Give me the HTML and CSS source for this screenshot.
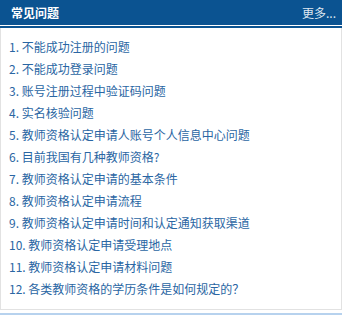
FILE: index.html
```html
<!DOCTYPE html>
<html>
<head>
<meta charset="utf-8">
<title>常见问题</title>
<link rel="stylesheet" href="styles.css">
</head>
<body>
<div class="faqbox">
	<div class="faqhead">
		<span class="faqtitle">常见问题</span>
		<a class="faqmore" href="#">更多...</a>
	</div>
	<ul class="faqlist">
		<li><a href="#">1. 不能成功注册的问题</a></li>
		<li><a href="#">2. 不能成功登录问题</a></li>
		<li><a href="#">3. 账号注册过程中验证码问题</a></li>
		<li><a href="#">4. 实名核验问题</a></li>
		<li><a href="#">5. 教师资格认定申请人账号个人信息中心问题</a></li>
		<li><a href="#">6. 目前我国有几种教师资格?</a></li>
		<li><a href="#">7. 教师资格认定申请的基本条件</a></li>
		<li><a href="#">8. 教师资格认定申请流程</a></li>
		<li><a href="#">9. 教师资格认定申请时间和认定通知获取渠道</a></li>
		<li><a href="#">10. 教师资格认定申请受理地点</a></li>
		<li><a href="#">11. 教师资格认定申请材料问题</a></li>
		<li><a href="#">12. 各类教师资格的学历条件是如何规定的？</a></li>
	</ul>
</div>
<div class="faqfoot"></div>
</body>
</html>
```
FILE: styles.css
```css
body {
	margin: 0;
	font-family: "Noto Sans CJK SC", "Liberation Sans", sans-serif;
	background-color: #ffffff;
}
.faqbox {
	width: 340px;
	border: 1px solid #e2e2e2;
	border-top: none;
}
.faqhead {
	display: flex;
	justify-content: space-between;
	align-items: center;
	height: 25px;
	padding: 0 6px 1px 11px;
	margin: 0 -1px;
	background-color: #0b5391;
	border-bottom: 2px solid #0b5391;
	box-shadow: inset 0 -1px 0 #ffffff;
}
.faqtitle {
	color: #ffffff;
	font-weight: bold;
	font-size: 12px;
}
.faqmore {
	color: #dfe7f0;
	font-size: 12px;
	text-decoration: none;
}
.faqlist {
	list-style: none;
	margin: 0;
	padding: 8px 0 9px 8px;
}
.faqlist li {
	height: 22px;
	line-height: 22px;
	font-size: 12px;
}
.faqlist a {
	color: #2a66a3;
	text-decoration: none;
}
.faqfoot {
	margin-top: 3px;
	height: 2px;
	background-color: #b7d2ee;
}
```
